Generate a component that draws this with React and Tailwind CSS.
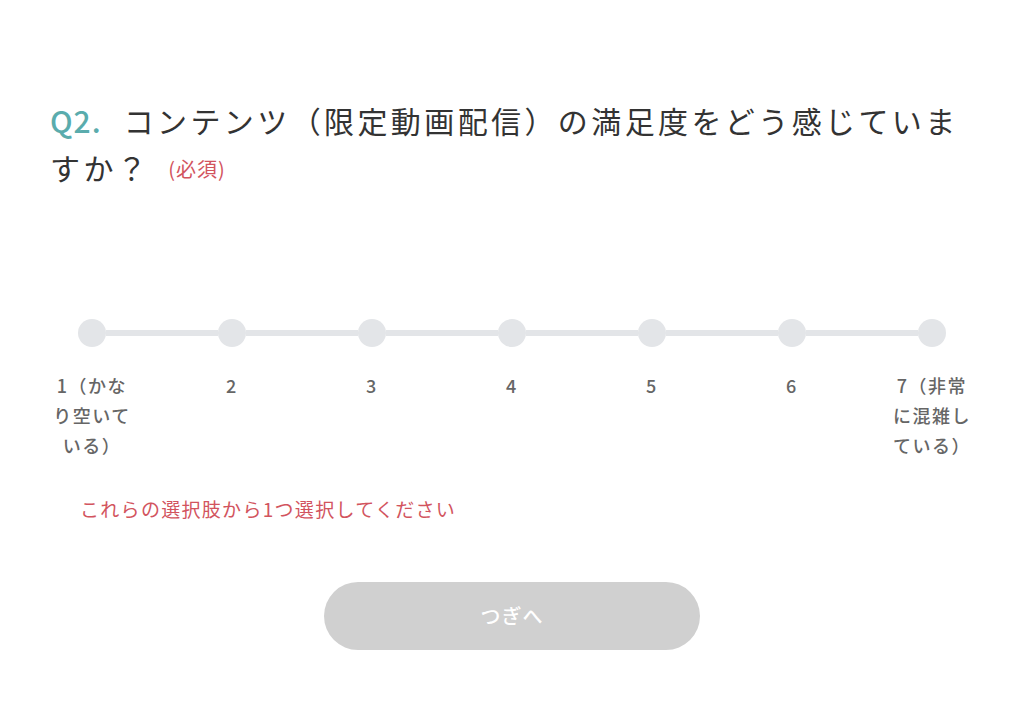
const LABELS = [
  '1（かなり空いている）',
  '2',
  '3',
  '4',
  '5',
  '6',
  '7（非常に混雑している）',
]

const FONT = { fontFamily: '"Noto Sans CJK JP", "Noto Sans", sans-serif' }

export default function App() {
  return (
    <div className="w-[1024px] h-[722px] bg-white text-[#333]" style={FONT}>
      <div className="pl-[50px] pr-[62px] pt-[97px]">
        <h2 className="text-[30px] leading-[47px] tracking-[3.4px] text-[#333]">
          <span className="text-[#5aacad] font-medium tracking-[1px] mr-[22px]">Q2.</span>
          コンテンツ（限定動画配信）の満足度をどう感じていますか？
          <span className="ml-[18px] text-[20px] tracking-[1px] text-[#d2545e] align-[3px]">(必須)</span>
        </h2>
      </div>

      <div className="mt-[127px] px-[78px] flex items-center">
        {LABELS.map((_, i) => (
          <div key={i} className={i === 0 ? 'flex items-center' : 'flex items-center flex-1'}>
            {i > 0 && <div className="flex-1 h-[6px] bg-[#e3e5e8]" />}
            <div className="w-[28px] h-[28px] rounded-full bg-[#e3e5e8] shrink-0" />
          </div>
        ))}
      </div>

      <div className="mt-[23px] px-[22px] grid grid-cols-7">
        {LABELS.map((label) => (
          <div key={label} className="flex justify-center">
            <p className="w-[80px] text-center text-[18px] leading-[30px] tracking-[1.5px] font-medium text-[#666]">
              {label}
            </p>
          </div>
        ))}
      </div>

      <p className="mt-[35px] pl-[80px] text-[19px] tracking-[1.3px] text-[#d2545e]">
        これらの選択肢から1つ選択してください
      </p>

      <div className="mt-[58px] flex justify-center">
        <button
          type="button"
          className="w-[376px] h-[68px] rounded-full bg-[#d0d0d0] text-white text-[20px] font-medium tracking-[1px]"
        >
          つぎへ
        </button>
      </div>
    </div>
  )
}
